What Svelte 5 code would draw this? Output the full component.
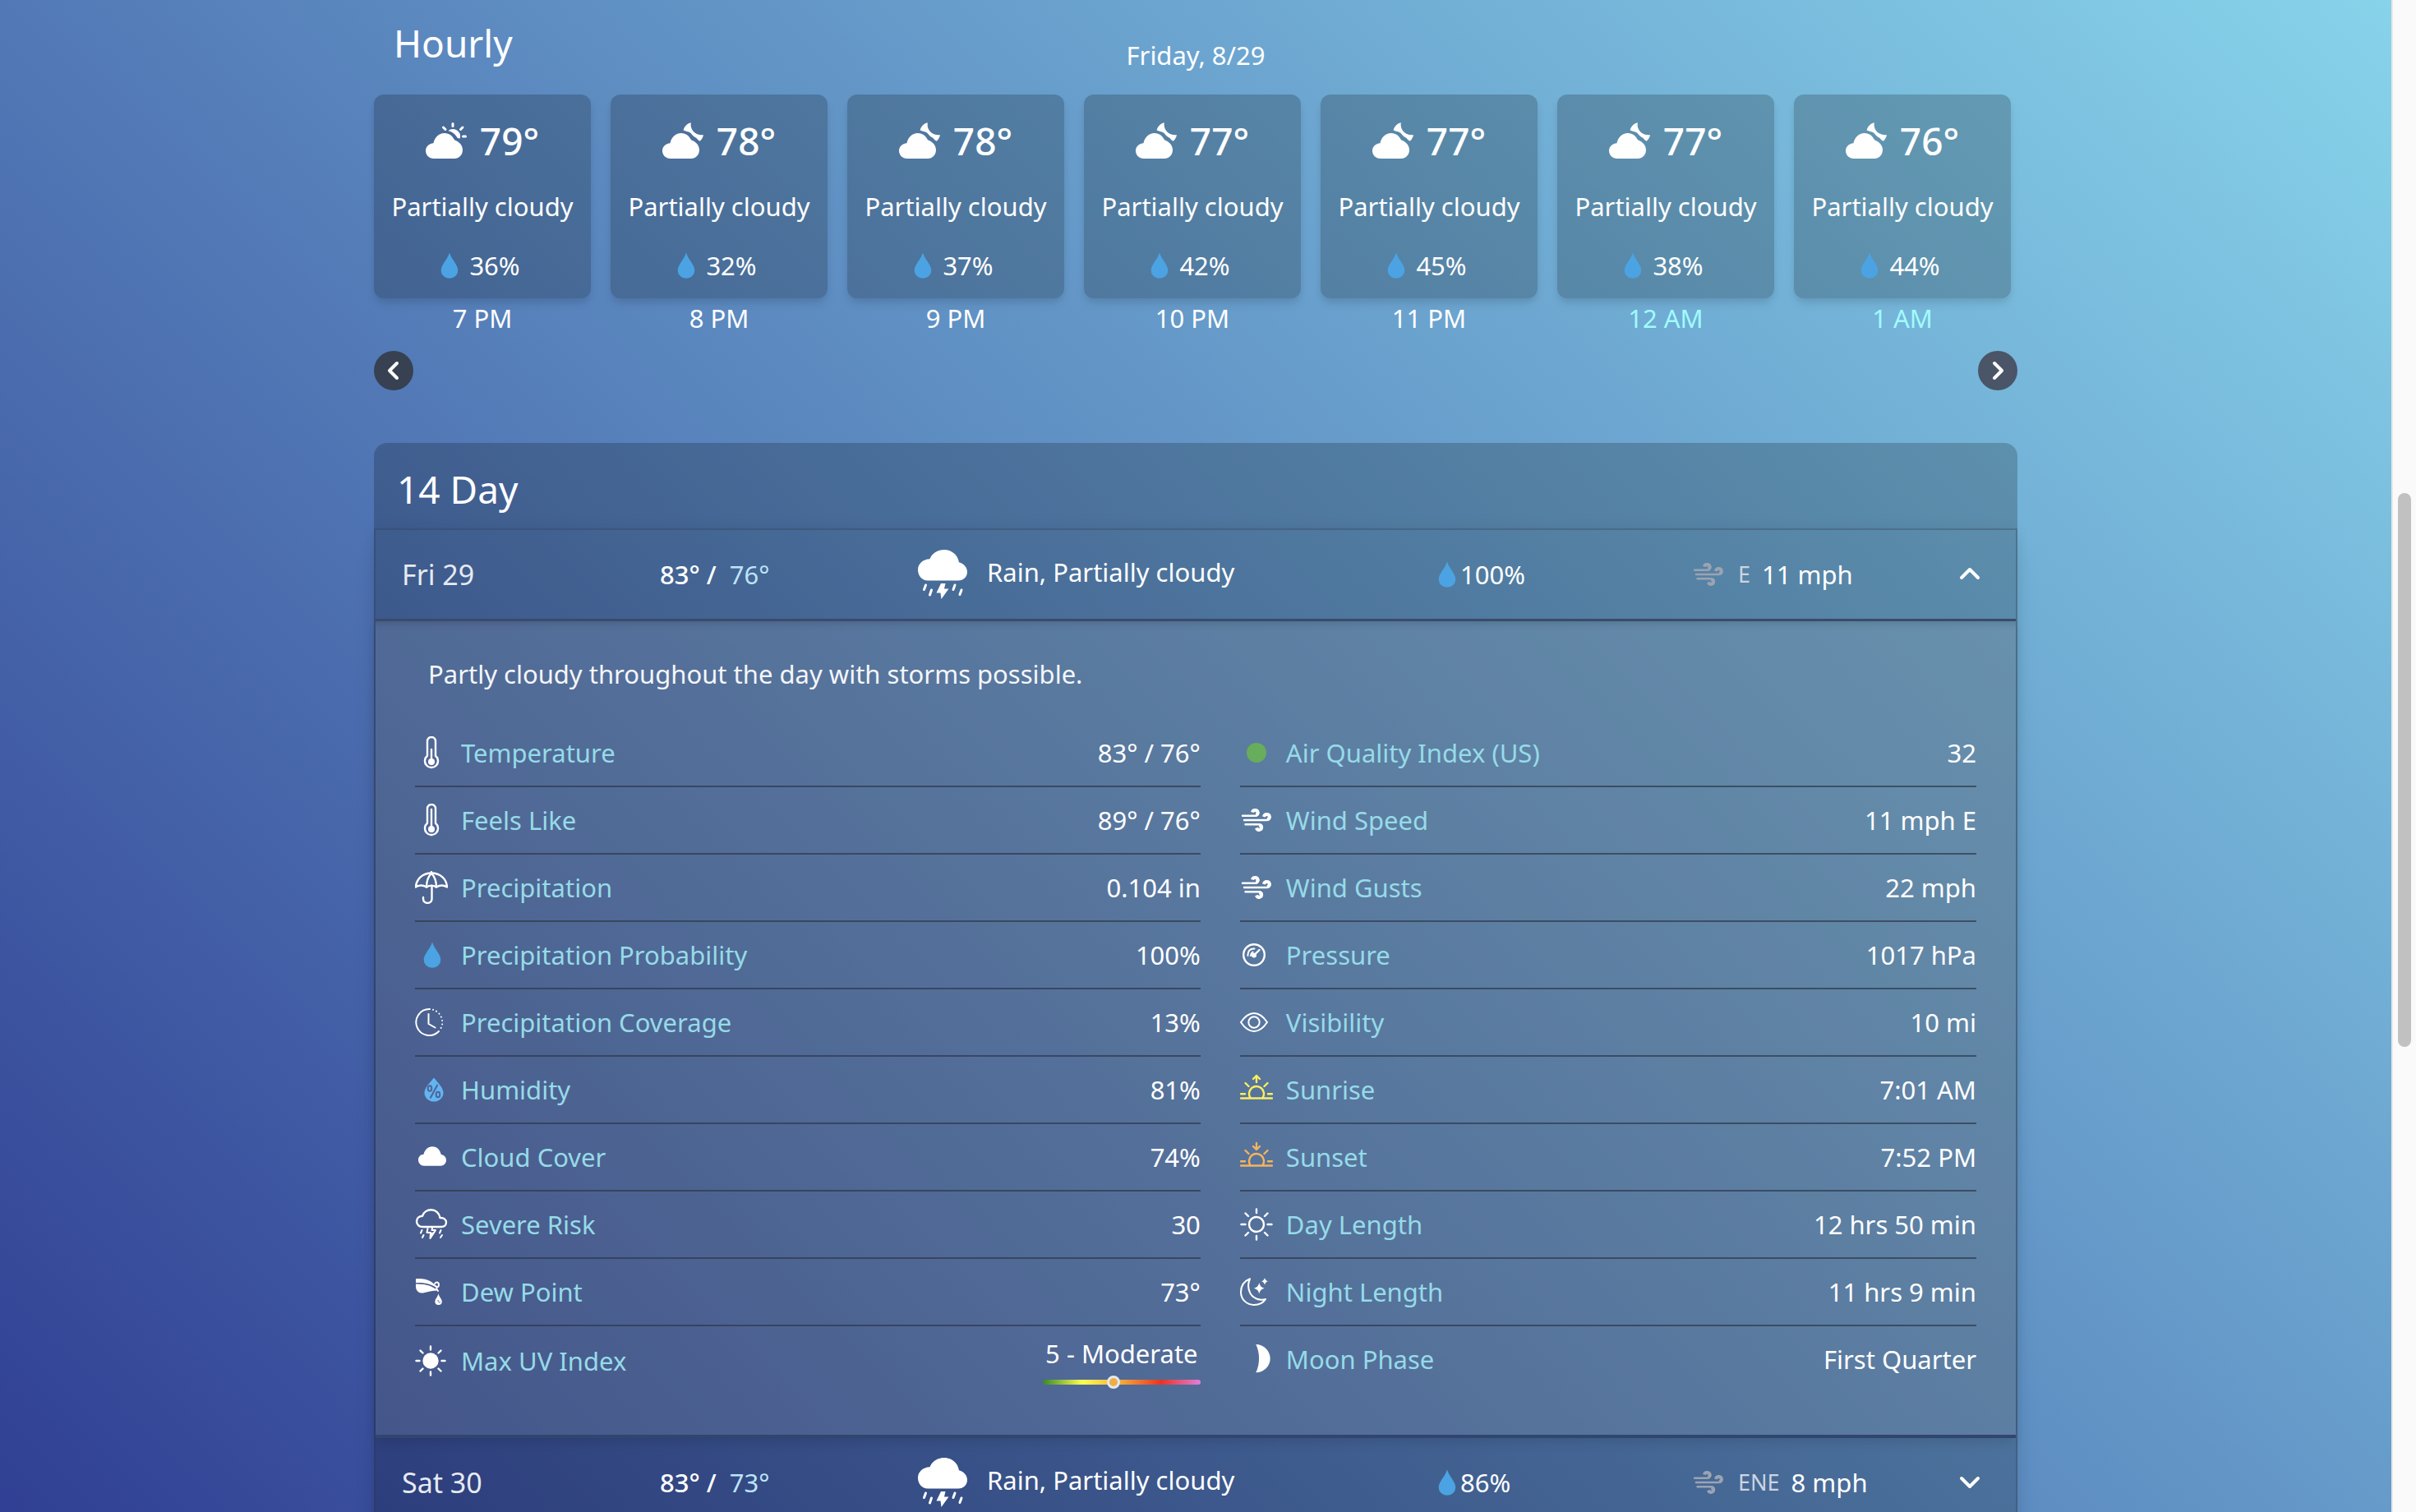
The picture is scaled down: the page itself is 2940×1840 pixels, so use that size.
<script>
  const hours = [
    { icon: 'cloudSun', temp: 79, rain: 36, time: '7 PM' },
    { icon: 'cloudMoon', temp: 78, rain: 32, time: '8 PM' },
    { icon: 'cloudMoon', temp: 78, rain: 37, time: '9 PM' },
    { icon: 'cloudMoon', temp: 77, rain: 42, time: '10 PM' },
    { icon: 'cloudMoon', temp: 77, rain: 45, time: '11 PM' },
    { icon: 'cloudMoon', temp: 77, rain: 38, time: '12 AM', next: true },
    { icon: 'cloudMoon', temp: 76, rain: 44, time: '1 AM', next: true }
  ];

  const left = [
    ['thermo', 'Temperature', '83° / 76°'],
    ['thermoFull', 'Feels Like', '89° / 76°'],
    ['umbrella', 'Precipitation', '0.104 in'],
    ['drop', 'Precipitation Probability', '100%'],
    ['clock', 'Precipitation Coverage', '13%'],
    ['humidity', 'Humidity', '81%'],
    ['cloud', 'Cloud Cover', '74%'],
    ['severe', 'Severe Risk', '30'],
    ['dew', 'Dew Point', '73°'],
    ['sun', 'Max UV Index', '5 - Moderate']
  ];

  const right = [
    ['dot', 'Air Quality Index (US)', '32'],
    ['wind', 'Wind Speed', '11 mph E'],
    ['wind', 'Wind Gusts', '22 mph'],
    ['gauge', 'Pressure', '1017 hPa'],
    ['eye', 'Visibility', '10 mi'],
    ['sunrise', 'Sunrise', '7:01 AM'],
    ['sunset', 'Sunset', '7:52 PM'],
    ['day', 'Day Length', '12 hrs 50 min'],
    ['night', 'Night Length', '11 hrs 9 min'],
    ['moon', 'Moon Phase', 'First Quarter']
  ];

  const days = [
    { name: 'Fri 29', high: 83, low: 76, rain: 100, dir: 'E', wind: 11, open: true },
    { name: 'Sat 30', high: 83, low: 73, rain: 86, dir: 'ENE', wind: 8, open: false }
  ];

  const uvPosition = 45;
</script>

{#snippet horizon()}
  <path d="M1 30.5H39M1 25.2H6M34 25.2H39M6.5 12L10.500 16M33.5 12L29.500 16M12.5 30A9 9 0 1 1 27.5 30" />
{/snippet}

{#snippet icon(name)}
  <svg class="icon" viewBox="0 0 40 40" aria-hidden="true">
    {#if name === 'thermo' || name === 'thermoFull'}
      <g class="line">
        <path d="M15 23.8V6a5 5 0 0 1 10 0v17.8a8 8 0 1 1-10 0z" />
        <path d={name === 'thermo' ? 'M20 16V30' : 'M20 7V30'} />
      </g>
      <circle class="fill" cx="20" cy="31" r="4" />
    {:else if name === 'umbrella'}
      <g class="line">
        <path d="M1 19.5C1.500 10 9 2.500 20 2.500S38.500 10 39 19.500C35 17 30 17 26 19.500C22 17 18 17 14 19.500C10 17 5 17 1 19.500z" />
        <path d="M20 2.500C16 7 14 13 14 19.500M20 2.500C24 7 26 13 26 19.500M20 1V3M20.500 18V34c0 6.500-10.500 6.500-10.500 0V32" />
      </g>
    {:else if name === 'drop'}
      <path class="water" d="M21 4.500C23.500 13 31.300 19 31.300 26.300a10.300 9.500 0 0 1-20.600 0C10.700 19 18.500 13 21 4.500z" />
    {:else if name === 'clock'}
      <g class="line thin">
        <path d="M18 4A16 16 0 1 0 29 31M16.500 10V22L24.500 26.500" />
        <path class="dots" d="M22 4.700A16 16 0 0 1 30.800 28.500" />
      </g>
    {:else if name === 'humidity'}
      <path class="mist" d="M23 5.500C27 11 34.500 17 34.500 24a11.500 10.600 0 0 1-23 0C11.500 17 19 11 23 5.500z" />
      <g class="cut"><ellipse cx="18" cy="18.500" rx="2.300" ry="3.300" /><ellipse cx="28" cy="26" rx="2.300" ry="3.300" /><path d="M27.500 14L18.500 30.500" /></g>
    {:else if name === 'cloud'}
      <path class="fill" d="M11 30.700C7 30.700 4 27.500 4 23.500c0-4 3-6.800 6.500-6.800C12 11 16 7.300 21 7.300c6 0 9.500 4 10.800 9.700C35.500 17.500 38 20.300 38 23.800c0 4-3 6.900-6.800 6.900z" />
    {:else if name === 'severe'}
      <path class="line" d="M9 23C5 23 2 20 2 16.500S4.500 10 9 9.800C10.500 5 15 2.300 19.500 2.300C25 2.300 29.500 6 30.500 12C35 11.500 38 14.500 38 17.500C38 20.800 35.500 23 32 23z" />
      <path class="line thin" d="M8.500 27L7 30.500M10.500 33L9 36M31.500 27L30 30.500M33 33L31 36M15.500 25L14.500 30H19L18.500 37L25 27H20.500L21 24.500" />
      <path class="fill" d="M18 30L18.500 38L25.500 27.500L21 30z" />
    {:else if name === 'dew'}
      <path class="fill" d="M1 4.300C13 3 22 7 28 16.500C20 10 12 8.500 1 9z" />
      <path class="fill" d="M1 10.500C13 10 21 13 28 18.500C20 18 13 21.500 8 21.500C4 21.500 1 18 1 14z" />
      <path class="line thin" d="M24 10.500C25 7.500 29 8 29 11.500C29 14 26.500 15.500 25.500 13M26 16L28 19" />
      <path class="fill" d="M28.500 22C29 26 32.800 28.500 32.800 32a4.200 4 0 0 1-8.400 0C24.400 28.500 28 26 28.500 22z" />
      <path class="cut small" d="M28 30C28 33 30 33.500 31 32" />
    {:else if name === 'sun'}
      <circle class="fill" cx="19" cy="20" r="9.700" />
      <path class="line" d="M19 2.500V6.500M19 33.500V37.500M1.500 20H5.500M32.500 20H36.500M6.500 7.500L9.500 10.500M28.500 10.500L31.500 7.500M6.500 32.500L9.500 29.500M28.500 29.500L31.500 32.500" />
    {:else if name === 'dot'}
      <circle class="good" cx="20" cy="20" r="12" />
    {:else if name === 'wind'}
      <path class="line" d="M3 14.800H18C21 14.800 22.500 12.800 22.500 11M5 20H32C35 20 36.500 18 36.500 16M6.500 25.300H22C25.500 25.300 27 27 27 29" />
      <path class="blob" d="M15 10.500C16 6.500 22 7.500 21.500 11.500C21.300 13 20.500 13.700 19.500 14M29 16C30 11.500 36 12.500 35.800 16.500C35.600 18 34.500 19 33 19.200M20 29.500C21.500 33.500 26.500 32 26 28.500C25.800 27.200 25 26.500 23.500 26" />
    {:else if name === 'gauge'}
      <circle class="line" cx="17" cy="20" r="12.800" />
      <path class="line thin" d="M9.500 21C9 15.500 12.500 12 17.500 12.500M13 21C13 18.500 14 17.500 15.500 16.500" />
      <path class="line" d="M17 20.500L23.500 14" />
      <circle class="fill" cx="17" cy="20.500" r="3" />
    {:else if name === 'eye'}
      <path class="line thin" d="M1 20C6 12.500 11 9 17 9S28 12.500 33 20C28 27.500 23 31 17 31S6 27.500 1 20z" />
      <circle class="line thin" cx="17" cy="20" r="6.700" />
    {:else if name === 'sunrise'}
      <g class="line rise">{@render horizon()}<path d="M20 11V3M16 7L20 3L24 7" /></g>
    {:else if name === 'sunset'}
      <g class="line set">{@render horizon()}<path d="M20 3V10.500M16 7L20 11L24 7" /></g>
    {:else if name === 'day'}
      <circle class="line" cx="20" cy="20" r="9" />
      <path class="line" d="M20 1.500V6M20 34V38.500M1.500 20H6.500M33.500 20H38.500M6.500 6.500L10 10M30 10L33.500 6.500M6.500 33.500L10 30M30 30L33.500 33.500" />
    {:else if name === 'night'}
      <path class="line thin" d="M12 4.300C4 7.500 1 14 1 20.500C1 29.500 8.500 36 17 36C23.500 36 28.500 33 31 29C23 31 16 28 12.500 22C9.500 16.500 9.500 10 12 4.300z" />
      <path class="fill" d="M23.300 9Q24.300 14.500 29.500 15.700Q24.300 17 23.300 22.500Q22.300 17 17 15.700Q22.300 14.500 23.300 9zM30 3Q30.800 6.500 34 7.300Q30.800 8.200 30 11.700Q29.200 8.200 26 7.300Q29.200 6.500 30 3z" />
    {:else if name === 'moon'}
      <path class="fill" d="M19.300 2C29 2 36.700 10 36.700 19.200S29 36.300 19.300 36.300C24.300 26 24.300 12 19.300 2z" />
    {/if}
  </svg>
{/snippet}

{#snippet hourIcon(name)}
  <svg class="hour-icon" viewBox="0 0 50 44" aria-hidden="true">
    <path class="fill" d="M10 44C4 44 0 39.500 0 34.500S4 25.500 9.500 25.200C11 18 16 13 22.800 13C29 13 33 17 35 21.300C41 23.500 45 28 45 33.500C45 39.500 40.500 44 35 44z" />
    {#if name === 'cloudSun'}
      <path class="fill" d="M27.500 10.300C31 7 36.500 7.500 39.800 11C42.300 13.500 42.700 17 41.500 19.800L38.500 18.800C36.500 15 33 11.500 27.500 10.300z" />
      <path class="line ray" d="M33 1.500V4.500M21.500 6L24 8.500M45 6L42.500 8.500M45.500 17H48.500" />
    {:else}
      <path class="fill" d="M25.600 9.500C26.500 5 30 1.500 34.800.2C33.500 8 39 16 50 15.200C49.500 18 48 20.800 45.500 22.700C43.500 21.500 42.500 20.500 41.500 19C38.500 18 36 14.500 34 12.500C31.500 10.800 28 11 25.600 9.500z" />
    {/if}
  </svg>
{/snippet}

{#snippet storm()}
  <svg class="storm" viewBox="0 0 60 60" aria-hidden="true">
    <path class="fill" d="M12 37.500C5 37.500 0 31.500 0 24.500C0 17 6 11.500 14.500 11.200C17 4.500 24 0 32 0C41 0 48.500 6 50 15.300C56 17 60 21.500 60 27C60 33 55.500 37.500 49 37.500z" />
    <path class="fill" d="M28 41H33.500L32 47.500H37.500L28.500 60L27.500 52.500H22.500z" />
    <path class="line ray" d="M9.500 43L7.500 48.500M16.500 49L14.500 55M45 43L43 48.500M53 49L51 54.500" />
  </svg>
{/snippet}

{#snippet smallDrop()}
  <svg class="small-drop" viewBox="0 0 24 40" aria-hidden="true">
    <path class="water" d="M12 4.500C14.500 13 22.300 19 22.300 26.300a10.300 9.500 0 0 1-20.600 0C1.700 19 9.500 13 12 4.500z" />
  </svg>
{/snippet}

{#snippet facts(rows)}
  <dl>
    {#each rows as [glyph, label, value]}
      <div class="fact" class:tall={glyph === 'sun'}>
        <dt>{@render icon(glyph)}{label}</dt>
        {#if glyph === 'sun'}
          <dd class="uv">
            <span>{value}</span>
            <div class="uv-bar"><i style="left: {uvPosition}%"></i></div>
          </dd>
        {:else}
          <dd>{value}</dd>
        {/if}
      </div>
    {/each}
  </dl>
{/snippet}

<div class="screen">
  <main>
    <section>
      <header class="hourly-head">
        <h2>Hourly</h2>
        <p>Friday, 8/29</p>
      </header>
      <ol class="hours">
        {#each hours as hour}
          <li>
            <article class="card">
              <div class="temp">{@render hourIcon(hour.icon)}<strong>{hour.temp}°</strong></div>
              <p>Partially cloudy</p>
              <div class="chance">{@render smallDrop()}<span>{hour.rain}%</span></div>
            </article>
            <time class:next={hour.next}>{hour.time}</time>
          </li>
        {/each}
      </ol>
      <nav>
        <button class="round" aria-label="Previous hours">
          <svg viewBox="0 0 48 48"><path class="line arrow" d="M28 15L19 24L28 33" /></svg>
        </button>
        <button class="round later" aria-label="Next hours">
          <svg viewBox="0 0 48 48"><path class="line arrow" d="M20 15L29 24L20 33" /></svg>
        </button>
      </nav>
    </section>

    <section class="panel">
      <h2>14 Day</h2>
      <div class="days">
        {#each days as day}
          <button class="day" aria-expanded={day.open}>
            <span class="name">{day.name}</span>
            <span class="range">{day.high}° / <span class="low">{day.low}°</span></span>
            <span class="sky">{@render storm()}<span>Rain, Partially cloudy</span></span>
            <span class="wet">{@render smallDrop()}{day.rain}%</span>
            <span class="gust">{@render icon('wind')}<small>{day.dir}</small>{day.wind} mph</span>
            <svg class="chevron" viewBox="0 0 48 48" aria-hidden="true">
              <path class="line arrow" d={day.open ? 'M14 28L24 18L34 28' : 'M14 19L24 29L34 19'} />
            </svg>
          </button>
          {#if day.open}
            <div class="detail">
              <p>Partly cloudy throughout the day with storms possible.</p>
              <div class="columns">
                {@render facts(left)}
                {@render facts(right)}
              </div>
            </div>
          {/if}
        {/each}
      </div>
    </section>
  </main>
  <div class="scroll"><div class="thumb"></div></div>
</div>

<style>
  :global(body) {
    margin: 0;
  }
  .screen {
    display: flex;
    height: 100vh;
    overflow: hidden;
    font: 400 31px/48px 'Noto Sans', 'Open Sans', sans-serif;
    color: #fff;
    background: #fafafa;
  }
  main {
    flex: 1;
    display: flex;
    flex-direction: column;
    align-items: center;
    background: linear-gradient(45deg, #303f93, #5c8ac0 50%, #87d3ea);
  }
  section {
    width: 100%;
    max-width: 2000px;
    flex-shrink: 0;
  }
  h2, p, ol, dl, dd {
    margin: 0;
    padding: 0;
  }
  h2 {
    font-size: 46px;
    line-height: 64px;
    font-weight: 400;
  }
  button {
    font: inherit;
    color: inherit;
    border: 0;
    padding: 0;
    background: none;
    text-align: left;
    cursor: pointer;
  }
  svg {
    display: block;
    flex-shrink: 0;
  }
  .fill {
    fill: #fff;
  }
  .line {
    fill: none;
    stroke: #fff;
    stroke-width: 2.4;
    stroke-linecap: round;
    stroke-linejoin: round;
  }
  .thin {
    stroke-width: 2;
  }
  .dots {
    stroke-dasharray: 0.1 4.4;
  }
  .ray {
    stroke-width: 3;
  }
  .arrow {
    stroke-width: 4;
  }
  .blob {
    fill: none;
    stroke: #fff;
    stroke-width: 4;
  }
  .rise {
    stroke: #faee5f;
  }
  .set {
    stroke: #f3b45f;
  }
  .water {
    fill: #4ba3e3;
  }
  .mist {
    fill: #63b5f1;
  }
  .good {
    fill: #68ad5b;
  }
  .cut {
    fill: none;
    stroke: #4c6496;
    stroke-width: 2;
  }
  .small {
    stroke-width: 1;
  }
  .icon {
    width: 40px;
    height: 40px;
  }

  .hourly-head {
    display: grid;
    grid-template-columns: 1fr auto 1fr;
    padding: 20px 24px 24px;
  }
  .hourly-head p {
    padding-top: 23px;
  }
  .hours {
    display: grid;
    grid-template-columns: repeat(7, 1fr);
    gap: 24px;
    padding-right: 8px;
    list-style: none;
    text-align: center;
  }
  .card {
    display: flex;
    flex-direction: column;
    gap: 24px;
    padding: 24px 8px 16px;
    border-radius: 12px;
    background: rgba(0, 0, 0, 0.2);
    box-shadow: 0 8px 12px -2px rgba(0, 0, 0, 0.1), 0 4px 8px -2px rgba(0, 0, 0, 0.06);
    white-space: nowrap;
  }
  .temp, .chance {
    display: flex;
    justify-content: center;
    align-items: center;
    gap: 16px;
  }
  .chance {
    gap: 12px;
    padding-right: 6px;
  }
  .temp strong {
    font-size: 46px;
    line-height: 64px;
    font-weight: 500;
  }
  .hour-icon {
    width: 50px;
    height: 44px;
  }
  .small-drop {
    width: 24px;
    height: 40px;
  }
  time {
    display: block;
  }
  .next {
    color: #a0fbfc;
  }
  nav {
    display: flex;
    justify-content: space-between;
    padding: 16px 0 64px;
  }
  .round {
    width: 48px;
    height: 48px;
    border-radius: 50%;
    background: #374152;
  }
  .later {
    background: #4a5568;
  }

  .panel {
    border-radius: 16px 16px 0 0;
    background: rgba(0, 0, 0, 0.2);
  }
  .panel h2 {
    padding: 24px 28px 16px;
  }
  .days {
    box-shadow: 0 20px 30px -6px rgba(0, 0, 0, 0.1), 0 8px 12px -4px rgba(0, 0, 0, 0.05), 0 0 16px rgba(0, 0, 0, 0.06);
    border: 2px solid rgba(45, 55, 72, 0.3);
  }
  .day {
    display: grid;
    grid-template-columns: 1fr 1fr 2fr 1fr 1fr 48px;
    align-items: center;
    width: 100%;
    height: 108px;
    padding: 0 32px;
  }
  .day > span {
    display: flex;
    align-items: center;
    white-space: nowrap;
  }
  .day > .name {
    font-size: 34px;
    color: #e6eaf1;
  }
  .day > .range {
    white-space: pre;
    font-weight: 500;
  }
  .low {
    padding-left: 8px;
    font-weight: 400;
    color: #bee3f8;
  }
  .sky {
    gap: 24px;
  }
  .sky > span {
    padding-bottom: 6px;
  }
  .wet {
    gap: 4px;
    padding-left: 4px;
  }
  .gust small {
    padding: 0 14px 0 16px;
    font-size: 27px;
    color: #cbd5e0;
  }
  .gust .icon .line, .gust .icon .blob {
    stroke: #9ba3b2;
  }
  .storm {
    width: 60px;
    height: 60px;
  }
  .chevron {
    width: 48px;
    height: 48px;
  }
  .detail {
    padding: 40px 48px 48px;
    border-top: 3px solid #3a4b6c;
    border-bottom: 4px solid #31466f;
    background: rgba(160, 174, 192, 0.2);
    background-clip: padding-box;
    box-shadow: inset 0 20px 10px -18px rgba(0, 0, 0, 0.16), 0 8px 12px -2px rgba(0, 0, 0, 0.1);
  }
  .detail > p {
    padding: 0 16px 32px;
    color: #f4f6f9;
  }
  .columns {
    display: grid;
    grid-template-columns: 16fr 15fr;
    gap: 48px;
  }
  .fact {
    display: flex;
    justify-content: space-between;
    align-items: center;
    height: 80px;
    border-bottom: 2px solid rgba(45, 55, 72, 0.7);
  }
  .fact:last-child {
    border-bottom: 0;
  }
  .tall {
    height: 84px;
  }
  dt {
    display: flex;
    align-items: center;
    gap: 16px;
    color: #96dbe8;
  }
  .uv {
    width: 192px;
    padding-top: 4px;
    text-align: center;
  }
  .uv span {
    display: block;
  }
  .uv-bar {
    position: relative;
    height: 6px;
    margin: 8px 0;
    border-radius: 3px;
    background: linear-gradient(90deg, #38892b, #fdfd54 25%, #f2a83b 50%, #ea3323 75%, #df80dd);
  }
  .uv-bar i {
    position: absolute;
    top: -5px;
    width: 10px;
    height: 10px;
    margin-left: -8px;
    border: 3px solid #e2e8f0;
    border-radius: 50%;
    background: #f0ad44;
  }

  .scroll {
    width: 28px;
    border-left: 2px solid #e8e8e8;
    background: #fafafa;
  }
  .thumb {
    width: 16px;
    height: 674px;
    margin: 600px auto 0;
    border-radius: 8px;
    background: #c1c1c1;
  }
</style>
